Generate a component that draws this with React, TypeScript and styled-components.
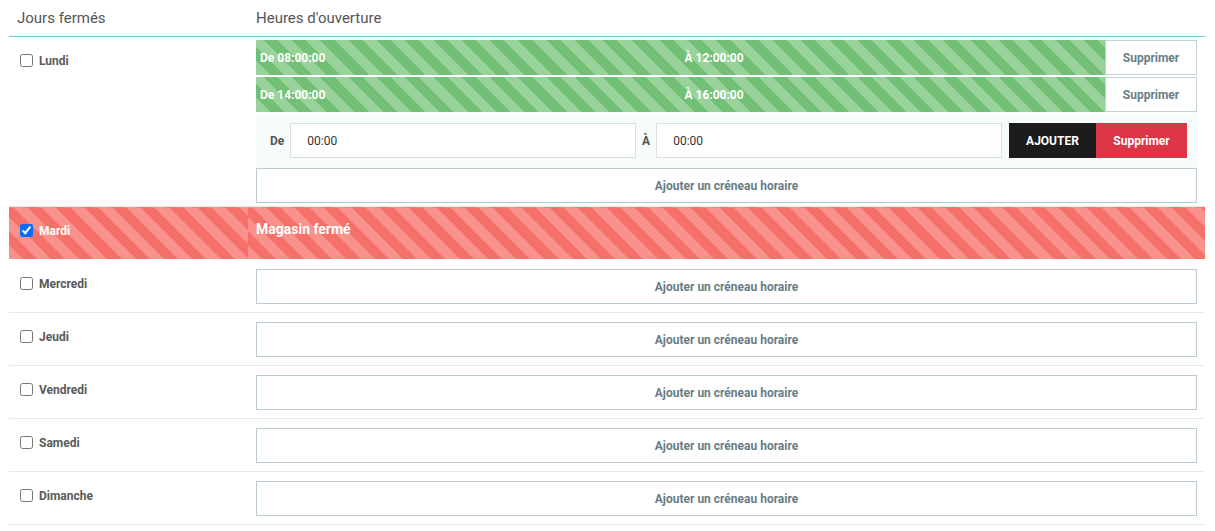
import React, { FC, useState } from 'react';
import styled, { createGlobalStyle, css } from 'styled-components';

const GlobalStyle = createGlobalStyle`
  html, body {
    margin: 0;
    padding: 0;
    background: #fff;
  }
  body {
    font-family: Roboto, 'Liberation Sans', Arial, sans-serif;
    color: #555;
  }
`;

const stripes = (dark: string, light: string) => css`
  background: repeating-linear-gradient(
    45deg,
    ${light} 0,
    ${light} 10px,
    ${dark} 10px,
    ${dark} 20px
  );
`;

const Page = styled.div`
  padding: 0 10px 0 9px;
`;

const Table = styled.table`
  width: 100%;
  border-collapse: collapse;
  border-spacing: 0;
`;

const HeadCell = styled.th`
  text-align: left;
  font-weight: 400;
  font-size: 15px;
  line-height: 20px;
  color: #555;
  padding: 8px;
  border-bottom: 1px solid #6cc5db;
`;

const Row = styled.tr<{ $closed?: boolean }>`
  border-bottom: 1px solid ${(p) => (p.$closed ? '#fff' : '#e6eaed')};
`;

const DayCell = styled.td<{ $closed?: boolean }>`
  width: 220px;
  vertical-align: top;
  padding: 15px 8px 8px 11px;
  ${(p) => p.$closed && stripes('#f6706a', '#f9928c')}
`;

const HoursCell = styled.td<{ $closed?: boolean; $compact?: boolean }>`
  vertical-align: top;
  padding: ${(p) => (p.$compact ? '3px 8px 3px' : '9px 8px 8px')};
  ${(p) =>
    p.$closed &&
    css`
      ${stripes('#f6706a', '#f9928c')}
      padding: 12px 8px 0;
      height: 40px;
    `}
`;

const DayLabel = styled.label<{ $closed?: boolean }>`
  display: inline-flex;
  align-items: center;
  gap: 6px;
  font-size: 12px;
  font-weight: 700;
  color: ${(p) => (p.$closed ? '#fff' : '#5a5a5a')};

  input {
    margin: 0;
    width: 13px;
    height: 13px;
    accent-color: #0b6cf2;
  }
`;

const ClosedText = styled.span`
  display: block;
  color: #fff;
  font-size: 14px;
  line-height: 20px;
  font-weight: 700;
`;

const SlotRow = styled.div`
  display: flex;
  height: 35px;
  margin-bottom: 2px;
`;

const SlotBar = styled.div`
  flex: 1;
  display: flex;
  align-items: center;
  ${stripes('#72c075', '#99d29b')}
  color: #fff;
  font-size: 12px;
  font-weight: 700;
`;

const SlotHalf = styled.span`
  flex: 1;
  padding: 0 4px;
`;

const GhostButton = styled.button`
  width: 92px;
  border: 1px solid #c4d0d6;
  background: #fff;
  color: #6a7d86;
  font-family: inherit;
  font-size: 12px;
  font-weight: 700;
  cursor: pointer;
`;

const AddForm = styled.div`
  display: flex;
  align-items: center;
  gap: 6px;
  background: #f6fbfc;
  padding: 10px 10px 10px 14px;
  margin-top: -1px;
`;

const FormLabel = styled.span`
  font-size: 12px;
  font-weight: 700;
  color: #555;
`;

const TimeInput = styled.input`
  flex: 1;
  min-width: 0;
  height: 35px;
  box-sizing: border-box;
  border: 1px solid #dcdfe0;
  padding: 0 16px;
  font-family: inherit;
  font-size: 12px;
  color: #333;
  background: #fff;
  outline: none;
`;

const ActionButton = styled.button<{ $variant: 'dark' | 'danger' }>`
  height: 35px;
  border: none;
  font-family: inherit;
  font-size: 12px;
  font-weight: 700;
  color: #fff;
  cursor: pointer;
  background: ${(p) => (p.$variant === 'dark' ? '#1c1c1c' : '#dc3545')};
  width: ${(p) => (p.$variant === 'dark' ? '87px' : '91px')};
  margin-left: ${(p) => (p.$variant === 'dark' ? '1px' : '-6px')};
`;

const AddSlotButton = styled.button`
  display: block;
  width: 100%;
  height: 35px;
  border: 1px solid #bccbd2;
  background: #fff;
  color: #687c85;
  font-family: inherit;
  font-size: 12px;
  font-weight: 700;
  cursor: pointer;
`;

interface ISlot {
  from: string;
  to: string;
}

interface IDay {
  name: string;
  closed: boolean;
  slots: ISlot[];
  editing?: boolean;
}

const initialDays: IDay[] = [
  {
    name: 'Lundi',
    closed: false,
    editing: true,
    slots: [
      { from: '08:00:00', to: '12:00:00' },
      { from: '14:00:00', to: '16:00:00' },
    ],
  },
  { name: 'Mardi', closed: true, slots: [] },
  { name: 'Mercredi', closed: false, slots: [] },
  { name: 'Jeudi', closed: false, slots: [] },
  { name: 'Vendredi', closed: false, slots: [] },
  { name: 'Samedi', closed: false, slots: [] },
  { name: 'Dimanche', closed: false, slots: [] },
];

const App: FC = () => {
  const [days, setDays] = useState<IDay[]>(initialDays);

  const toggleDay = (name: string) => {
    setDays((prev) =>
      prev.map((d) => (d.name === name ? { ...d, closed: !d.closed } : d))
    );
  };

  return (
    <Page>
      <GlobalStyle />
      <Table>
        <thead>
          <tr>
            <HeadCell>Jours fermés</HeadCell>
            <HeadCell>Heures d'ouverture</HeadCell>
          </tr>
        </thead>
        <tbody>
          {days.map((day) => (
            <Row key={day.name} $closed={day.closed}>
              <DayCell $closed={day.closed}>
                <DayLabel $closed={day.closed}>
                  <input
                    type="checkbox"
                    checked={day.closed}
                    onChange={() => toggleDay(day.name)}
                  />
                  {day.name}
                </DayLabel>
              </DayCell>
              {day.closed ? (
                <HoursCell $closed>
                  <ClosedText>Magasin fermé</ClosedText>
                </HoursCell>
              ) : (
                <HoursCell $compact={day.slots.length > 0}>
                  {day.slots.map((slot) => (
                    <SlotRow key={slot.from}>
                      <SlotBar>
                        <SlotHalf>De {slot.from}</SlotHalf>
                        <SlotHalf>À {slot.to}</SlotHalf>
                      </SlotBar>
                      <GhostButton>Supprimer</GhostButton>
                    </SlotRow>
                  ))}
                  {day.editing && (
                    <AddForm>
                      <FormLabel>De</FormLabel>
                      <TimeInput defaultValue="00:00" />
                      <FormLabel>À</FormLabel>
                      <TimeInput defaultValue="00:00" />
                      <ActionButton $variant="dark">AJOUTER</ActionButton>
                      <ActionButton $variant="danger">Supprimer</ActionButton>
                    </AddForm>
                  )}
                  <AddSlotButton>Ajouter un créneau horaire</AddSlotButton>
                </HoursCell>
              )}
            </Row>
          ))}
        </tbody>
      </Table>
    </Page>
  );
};

export default App;
